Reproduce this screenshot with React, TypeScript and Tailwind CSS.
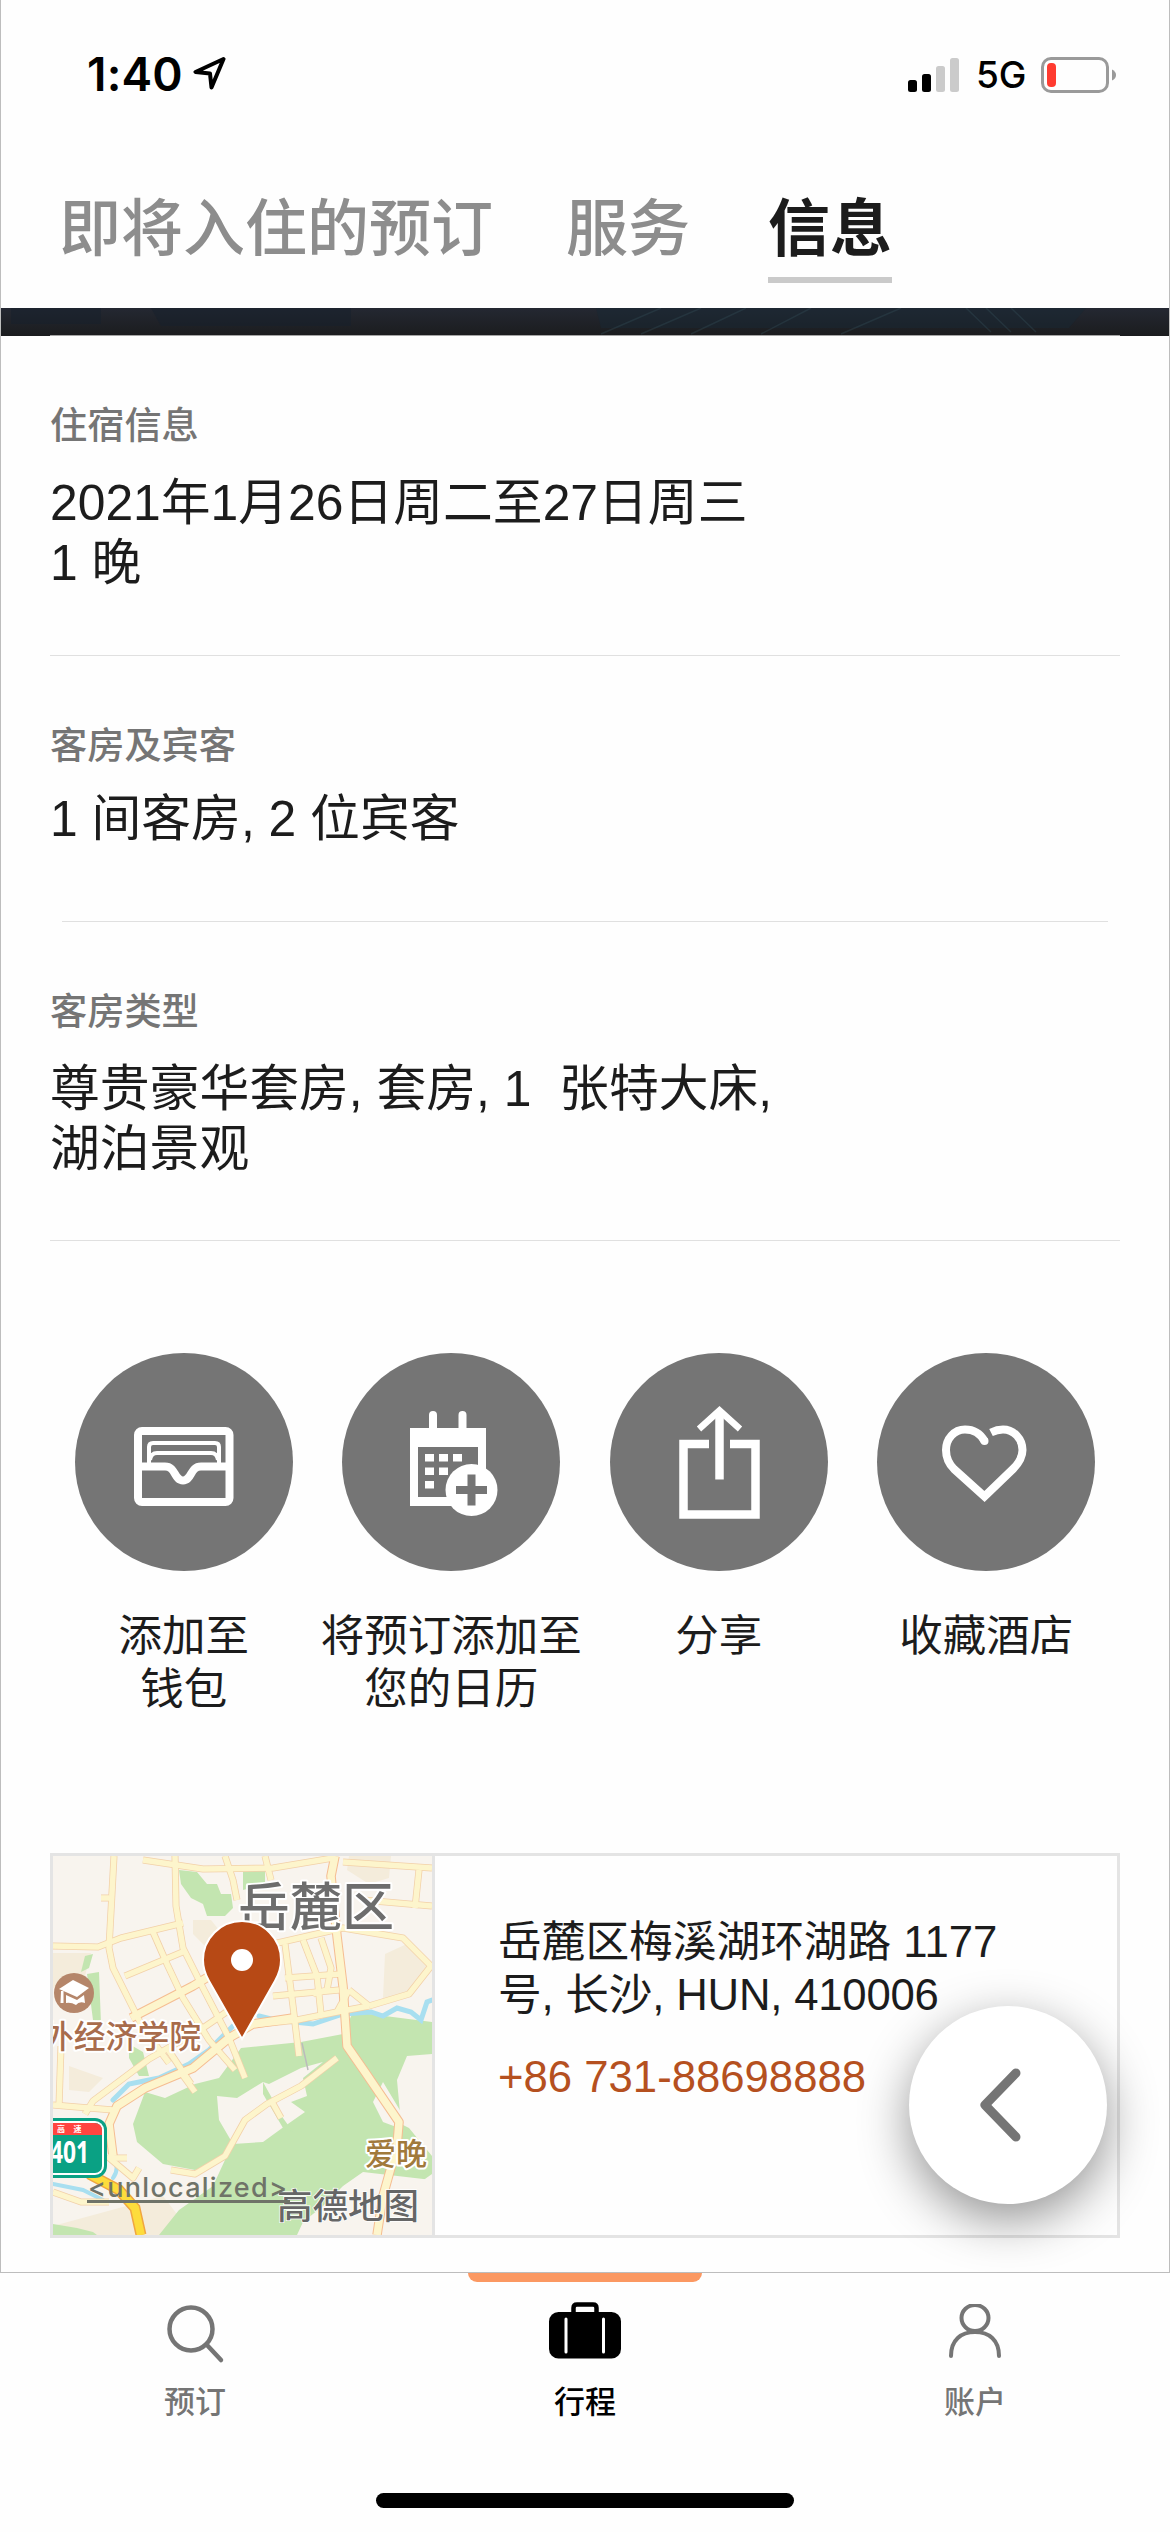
import React from "react";

const ROADS_MINOR = [
  "M61 0 L56 92 L60 112 L90 172 L116 207",
  "M122 0 L123 50 L130 92 L150 132 L176 182 L192 222",
  "M0 90 L45 91 L68 82 L130 67",
  "M72 120 L132 95",
  "M100 76 L114 108 L130 142 L156 184 L182 214",
  "M32 258 L40 245 L96 203 L150 172 L188 146",
  "M0 249 L60 254",
  "M8 190 L6 250",
  "M114 192 L138 228",
  "M126 214 L142 236",
  "M172 0 L180 24 L184 44",
  "M212 0 L218 24",
  "M90 4 L150 13 L220 12 L280 2",
  "M290 6 L379 12",
  "M366 14 L362 52",
  "M310 44 L379 50",
  "M48 42 L56 42",
  "M220 88 L290 72 L350 82 L378 110 L356 138 L316 150",
  "M232 88 L240 150 L246 200",
  "M250 84 L264 120 L268 158",
  "M268 82 L278 112 L274 134 L260 138",
  "M220 140 L286 134",
  "M232 122 L288 118",
  "M316 150 L284 156 L244 164 L190 170",
  "M296 134 L284 156",
  "M296 134 L316 150",
  "M118 314 L142 318 L172 300 L192 264 L214 248 L248 230 L284 202",
  "M218 244 L228 262",
  "M54 300 L80 322 L86 312",
  "M56 302 L74 302",
  "M0 336 L28 346 L56 346",
];
const ROADS_MAJOR = [
  "M282 0 L278 20 L284 80 L290 130 L294 190 L312 216 L346 266 L344 290 L330 340 L324 379",
  "M60 300 L56 268 L64 250 L92 232 L140 212 L176 182 L200 168 L240 162",
  "M78 162 L140 130 L160 118",
];

function RouteMap() {
  return (
    <svg viewBox="0 0 379 379" className="block size-[379px]">
      <rect width="379" height="379" fill="#f8f4ee" />
      <path d="M0 97 L38 97 L32 120 L0 132Z M140 64h18l8 10-14 16-12-12Z M296 0h42l-2 22-20 6-22-14Z M332 98l26-12 18 24-20 28-26 4Z M16 210l34 12-14 14-20-2Z M0 370l110-30 30 39H0Z" fill="#f4ecdb" />
      <path d="M126 14 L144 16 L154 28 L164 28 L168 38 L178 38 L180 52 L172 60 L154 60 L150 48 L138 42 L128 28Z M32 100 L40 98 L36 112 L28 116Z M34 118 L46 116 L48 168 L40 164Z M190 14h22v14l-22 6Z" fill="#c3e5b0" />
      <path d="M92 236 L112 242 L142 228 L166 222 L188 192 L248 186 L290 178 L300 156 L332 160 L379 166 L379 198 L354 200 L344 224 L348 268 L356 272 L379 300 L379 318 L348 340 L336 379 L106 379 L126 354 L160 330 L172 304 L142 314 L110 308 L84 286 L80 268Z" fill="#c3e5b0" />
      <path d="M164 240 L184 242 L210 226 L216 228 L248 212 L270 206 L250 222 L254 240 L238 246 L252 256 L232 270 L210 286 L180 288 L166 264Z" fill="#f8f4ee" />
      <path d="M330 226 L320 246 L330 266 L346 272 L348 256Z M310 316 L290 330 L270 350 L250 366 L244 379 L379 379 L379 324Z" fill="#f8f4ee" />
      <path d="M0 368l24 4 16 4 4 3H0Z M76 188l14 8 6 24-10 0-10-18Z M210 226l20 36 10 14-10-4-20-34Z" fill="#c3e5b0" />
      <g fill="none" stroke="#a8dff0" strokeLinecap="round">
        <path d="M60 244 L76 228 L106 222 L136 208 L156 194 L180 170" strokeWidth="5" />
        <path d="M206 160 L222 164 L260 168 L290 158 L318 156 L330 160 L344 152 L358 156 L368 164 L374 146 L379 144" strokeWidth="5" />
        <path d="M62 306 Q66 314 60 322 M0 328 L30 334 L50 344" strokeWidth="4" />
      </g>
      <g fill="none" stroke="#f2d0a8" strokeWidth="7" strokeLinejoin="round">
        {ROADS_MINOR.map((d) => <path key={d} d={d} />)}
      </g>
      <g fill="none" stroke="#f5bd92" strokeWidth="9.500" strokeLinejoin="round">
        {ROADS_MAJOR.map((d) => <path key={d} d={d} />)}
      </g>
      <g fill="none" stroke="#fdf5cc" strokeWidth="5.500" strokeLinejoin="round">
        {ROADS_MINOR.map((d) => <path key={d} d={d} />)}
      </g>
      <g fill="none" stroke="#fdf5cc" strokeWidth="7.500" strokeLinejoin="round">
        {ROADS_MAJOR.map((d) => <path key={d} d={d} />)}
      </g>
      <path d="M249 187 L255 214" stroke="#bbb" strokeWidth="1.5" />
      <path d="M36 318 L66 334 L82 352 L88 379" fill="none" stroke="#f0a640" strokeWidth="11" />
      <path d="M36 318 L66 334 L82 352 L88 379" fill="none" stroke="#fddc3c" strokeWidth="8" />
      <circle cx="21" cy="137" r="20" fill="#b5866a" />
      <path d="M6 133 L20 124 L36 132 L24 141Z" fill="#fff" />
      <path d="M13 139 L24 144 L31 139 L32 147 Q26 145 23 149 Q18 146 13 147Z M8 135h2.500v12h-3Z" fill="#fff" />
      <rect x="-30" y="262" width="84" height="60" rx="12" fill="#0aa184" />
      <rect x="-27" y="265" width="78" height="54" rx="9" fill="#fff" />
      <rect x="-25" y="267" width="74" height="50" rx="7" fill="#0aa184" />
      <path d="M-20 267 H41 Q49 267 49 275 V279 H-20Z" fill="#ff4540" />
      <g fontFamily="'Noto Sans CJK SC', sans-serif">
        <text x="4" y="276" fontSize="8" fontWeight="700" fill="#fff">高</text>
        <text x="20.500" y="276" fontSize="8" fontWeight="700" fill="#fff">速</text>
        <text x="-3" y="306.500" fontSize="30" fontWeight="700" fill="#fff" textLength="39" lengthAdjust="spacingAndGlyphs" fontFamily="'Open Sans', sans-serif">401</text>
        <g paintOrder="stroke" stroke="#fff" strokeLinejoin="round">
          <text x="185" y="70" fontSize="52" fontWeight="500" fill="#6d6d6d" strokeWidth="4">岳麓区</text>
          <text x="-11" y="192" fontSize="31.800" fontWeight="500" fill="#a86c4c" strokeWidth="4">外经济学院</text>
          <text x="312" y="309" fontSize="31" fontWeight="500" fill="#a17a3c" strokeWidth="4">爱晚</text>
        </g>
        <text x="224" y="363" fontSize="35.500" fontWeight="500" fill="#666" stroke="#fff" strokeWidth="1.500" paintOrder="stroke">高德地图</text>
      </g>
      <text x="35" y="341" fontSize="27" fontWeight="500" fill="#6f7368" textLength="199" fontFamily="'Inter', sans-serif">&lt;unlocalized&gt;</text>
      <path d="M34 345.500H237" stroke="#6f7368" strokeWidth="3" />
      <path d="M189 183 L156 125 C152 118 150 111 150 104 A39 39 0 0 1 228 104 C228 111 226 118 222 125Z" fill="#b74915" stroke="#fff" strokeWidth="2" />
      <circle cx="189" cy="104" r="11" fill="#fff" />
    </svg>
  );
}

function Info({ label, lines, className, gap }: { label: string; lines: string[]; className: string; gap: string }) {
  return (
    <section className={"flex flex-col px-[49px] " + className}>
      <h2 className="text-[37.200px] leading-[50px] font-medium text-[#757575]">{label}</h2>
      <div className={"text-[49.800px] leading-[60px] text-[#1c1c1c] " + gap}>
        {lines.map((line) => (
          <p key={line} className="whitespace-pre">{line}</p>
        ))}
      </div>
    </section>
  );
}

const Wallet = () => (
  <g fill="none" stroke="#fff" strokeWidth="8">
    <rect x="63" y="78" width="91.500" height="71" rx="4" />
    <path d="M63 113.500 H90 C101 113.500 99 127.500 108 127.500 C117 127.500 115 113.500 126 113.500 H154" />
    <path d="M74 112 V94 Q74 90 78 90 H140 Q144 90 144 94 V112" strokeWidth="4" />
    <path d="M75 107 Q76 100 82 100 H136 Q142 100 143 107" strokeWidth="4" />
  </g>
);
const Calendar = () => (
  <g>
    <path d="M68 75 H144 V130 H136 V94 H76 V144 H112 V153 H68Z" fill="#fff" />
    <path d="M91 62 V80 M120.500 62 V80" stroke="#fff" strokeWidth="8" strokeLinecap="round" />
    <path d="M83 101h9v7.500h-9Z M97 101h9v7.500h-9Z M111 101h9v7.500h-9Z M83 114.500h9v7.500h-9Z M97 114.500h9v7.500h-9Z M83 128h9v7.500h-9Z" fill="#fff" />
    <circle cx="129.500" cy="137" r="26" fill="#fff" />
    <path d="M129.500 121.500v31 M114 137h31" stroke="#757575" strokeWidth="8" />
  </g>
);
const Share = () => (
  <g fill="none" stroke="#fff" strokeWidth="8.500">
    <path d="M99 91 H73.500 V161.500 H145.500 V91 H120" />
    <path d="M109.500 126.500 V60" />
    <path d="M89 76 L109.500 57.500 L130 76" strokeWidth="6.500" />
  </g>
);
const Heart = () => (
  <g fill="none" stroke="#fff" strokeWidth="8">
    <path d="M107.500 88 C103 80 96 76.500 88 76.500 C77 76.500 69 86 69 97 C69 104 72 111 77 116 L107.500 143.500 L136 116 C142 110 145.500 104 145.500 97 C145.500 86 137 76.500 126 76.500 C121 76.500 118 77.500 114 79.500" />
    <circle cx="107.500" cy="88" r="4" fill="#fff" stroke="none" />
  </g>
);

const ACTIONS = [
  { lines: ["添加至", "钱包"], Icon: Wallet },
  { lines: ["将预订添加至", "您的日历"], Icon: Calendar },
  { lines: ["分享"], Icon: Share },
  { lines: ["收藏酒店"], Icon: Heart },
];

export default function App() {
  return (
    <div className="relative flex h-[2532px] w-[1170px] flex-col overflow-hidden bg-[#fefefe] font-['Liberation_Sans','Noto_Sans_CJK_SC',sans-serif]">
      <div className="flex h-[2273px] flex-col border-x border-b border-[#bdbdbd]">
        <header className="flex h-[308px] shrink-0 flex-col">
          <div className="flex h-[150px] items-start justify-between pt-[47px] pr-[52px] pl-[86px]">
            <div className="flex items-center">
              <span className="font-['Inter'] text-[46px] leading-[54px] font-semibold tracking-[0.2px] text-black">1:40</span>
              <svg viewBox="0 0 34 34" className="mb-[2px] ml-[10px] size-[34px]" fill="none" stroke="#000" strokeWidth="4" strokeLinejoin="round">
                <path d="M30.500 3 L2.500 16 L17 17.500 L18.500 31.500Z" />
              </svg>
            </div>
            <div className="mt-[8px] flex items-center">
              <svg viewBox="0 0 52 36" className="h-[36px] w-[52px]">
                <rect y="23" width="9" height="12" rx="2.500" />
                <rect x="14" y="17" width="9" height="18" rx="2.500" />
                <rect x="28" y="9" width="9" height="26" rx="2.500" fill="#cbcbcb" />
                <rect x="42" y="1" width="9" height="34" rx="2.500" fill="#cbcbcb" />
              </svg>
              <span className="ml-[16px] w-[50px] font-['Inter'] text-[37px] leading-[40px] font-medium text-black">5G</span>
              <svg viewBox="0 0 76 36" className="ml-[15px] h-[36px] w-[76px]">
                <rect x="1.500" y="1.500" width="65" height="33" rx="8.500" fill="none" stroke="#9a9a9a" strokeWidth="3" />
                <rect x="6" y="6" width="9" height="24" rx="4" fill="#ff3b30" />
                <path d="M71 12.500 Q75 14.500 75 18 Q75 21.500 71 23.500Z" fill="#9a9a9a" />
              </svg>
            </div>
          </div>
          <nav className="flex pt-[37px] pl-[58px] text-[62px] leading-[86px] font-medium text-[#8d8d8d]">
            <span>即将入住的预订</span>
            <span className="ml-[73px]">服务</span>
            <span className="ml-[78px] border-b-[6px] border-[#cacaca] pb-[4px] font-bold text-[#1c1c1c]">信息</span>
          </nav>
        </header>

        <svg viewBox="0 0 1168 28" className="block h-[28px] w-full shrink-0">
          <defs>
            <linearGradient id="dusk" x1="0" y1="0" x2="0" y2="1">
              <stop offset="0" stopColor="#242832" />
              <stop offset="1" stopColor="#1b1c1e" />
            </linearGradient>
          </defs>
          <rect width="1168" height="28" fill="url(#dusk)" />
          <path d="M10 0H100V16H10Z M150 0H350V18H160Z" fill="#15202c" opacity="0.500" />
          <path d="M595 0H1085L1068 20H600Z" fill="#172733" opacity="0.500" />
          <path d="M600 26L660 0M640 26L700 0M690 26L745 0M760 26L810 0M840 26L900 0M965 0L990 24M985 0L1010 24M1010 0L1035 24" stroke="#35505a" strokeWidth="1.500" opacity="0.350" />
          <rect x="49" y="27" width="1070" height="1" fill="#a5a5a5" />
        </svg>

        <Info className="h-[319px] shrink-0 pt-[65px]" gap="mt-[22px]" label="住宿信息" lines={["2021年1月26日周二至27日周三", "1 晚"]} />
        <hr className="mx-[49px] h-px shrink-0 border-0 bg-[#e0e0e0]" />
        <Info className="h-[265px] shrink-0 pt-[65px]" gap="mt-[18px]" label="客房及宾客" lines={["1 间客房, 2 位宾客"]} />
        <hr className="mx-[61px] h-px shrink-0 border-0 bg-[#e0e0e0]" />
        <Info className="h-[318px] shrink-0 pt-[65px]" gap="mt-[22px]" label="客房类型" lines={["尊贵豪华套房, 套房, 1  张特大床,", "湖泊景观"]} />
        <hr className="mx-[49px] h-px shrink-0 border-0 bg-[#e0e0e0]" />

        <div className="mx-[49px] mt-[112px] grid h-[500px] shrink-0 grid-cols-4">
          {ACTIONS.map(({ lines, Icon }) => (
            <div key={lines[0]} className="flex flex-col items-center">
              <span className="size-[218px] rounded-full bg-[#757575]">
                <svg viewBox="0 0 218 218" className="size-[218px]"><Icon /></svg>
              </span>
              <span className="mt-[39px] text-center text-[43.500px] leading-[52.500px] text-[#1c1c1c]">
                {lines.map((l) => <span key={l} className="block whitespace-nowrap">{l}</span>)}
              </span>
            </div>
          ))}
        </div>

        <div className="mx-[49px] flex h-[385px] shrink-0 border-[3px] border-[#e4e4e4]">
          <div className="w-[382px] shrink-0 border-r-[3px] border-[#e4e4e4]"><RouteMap /></div>
          <div className="pt-[59px] pl-[63px] text-[43.700px] leading-[53px] text-[#1c1c1c]">
            <p className="whitespace-nowrap">岳麓区梅溪湖环湖路 1177</p>
            <p className="tracking-[-0.200px] whitespace-nowrap">号, 长沙, HUN, 410006</p>
            <p className="mt-[29px] text-[#b5501f]">+86 731-88698888</p>
          </div>
        </div>
      </div>

      <footer className="flex flex-1 flex-col items-center">
        <div className="h-[9px] w-[234px] rounded-b-[9px] bg-[#fb9862]" />
        <div className="flex w-full">
          <div className="flex w-[390px] flex-col items-center pt-[22px] text-[#757575]">
            <svg viewBox="0 0 60 60" className="size-[60px]" fill="none" stroke="currentColor" strokeWidth="4.500" strokeLinecap="round">
              <circle cx="26" cy="25" r="21.500" />
              <path d="M41.500 40.500 L56 56" />
            </svg>
            <span className="mt-[16px] text-[31px] leading-[46px] font-medium">预订</span>
          </div>
          <div className="flex w-[390px] flex-col items-center pt-[22px] text-black">
            <svg viewBox="0 0 72 60" className="h-[60px] w-[72px] overflow-visible">
              <path d="M24.500 10 V4 Q24.500 0.500 28 0.500 H44 Q47.500 0.500 47.500 4 V10" fill="none" stroke="#000" strokeWidth="4.500" />
              <rect y="8" width="72" height="46.500" rx="9.500" />
              <path d="M17 15v33M54.500 15v33" stroke="#fff" strokeWidth="3" strokeLinecap="round" />
            </svg>
            <span className="mt-[16px] text-[31px] leading-[46px] font-medium">行程</span>
          </div>
          <div className="flex w-[390px] flex-col items-center pt-[22px] text-[#757575]">
            <svg viewBox="0 0 56 60" className="h-[60px] w-[56px]" fill="none" stroke="currentColor" strokeWidth="4" strokeLinecap="round">
              <ellipse cx="28" cy="14" rx="13.500" ry="13" />
              <path d="M4 52 C4 36 14 28 28 28 C42 28 52 36 52 52" />
            </svg>
            <span className="mt-[16px] text-[31px] leading-[46px] font-medium">账户</span>
          </div>
        </div>
        <div className="mt-[67px] h-[15px] w-[418px] rounded-full bg-black" />
      </footer>

      <button className="absolute top-[2006px] left-[909px] flex size-[198px] items-center justify-center rounded-full bg-white shadow-[0_16px_50px_rgba(0,0,0,0.42)]">
        <svg viewBox="0 0 50 80" className="mr-[18px] h-[80px] w-[50px]" fill="none" stroke="#757575" strokeWidth="9" strokeLinecap="round" strokeLinejoin="round">
          <path d="M42 8 L11 40 L42 72" />
        </svg>
      </button>
    </div>
  );
}
